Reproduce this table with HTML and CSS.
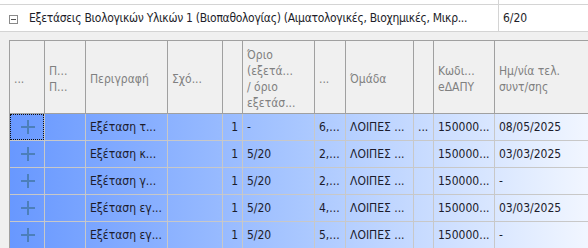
FILE: index.html
```html
<!DOCTYPE html>
<html lang="el">
<head>
<meta charset="utf-8">
<title>Εξετάσεις</title>
<link rel="stylesheet" href="styles.css">
</head>
<body>
<div class="page">
  <div class="strip"><div class="strip-main"></div><div class="strip-side"></div></div>
  <div class="group">
    <div class="group-main"><span class="collapse"></span><span class="group-title">Εξετάσεις Βιολογικών Υλικών 1 (Βιοπαθολογίας) (Αιματολογικές, Βιοχημικές, Μικρ...</span></div>
    <div class="group-side">6/20</div>
  </div>
  <div class="grid-area">
    <div class="table">
      <div class="row head">
        <div class="cell">...</div>
        <div class="cell">Π...<br>Π...</div>
        <div class="cell">Περιγραφή</div>
        <div class="cell">Σχό...</div>
        <div class="cell"></div>
        <div class="cell">Όριο<br>(εξετά...<br>/ όριο<br>εξετάσ...</div>
        <div class="cell">...</div>
        <div class="cell">Όμάδα</div>
        <div class="cell"></div>
        <div class="cell">Κωδι...<br>eΔΑΠΥ</div>
        <div class="cell last">Ημ/νία τελ.<br>συντ/σης</div>
      </div>

      <div class="row data">
        <div class="cell icon-cell"><div class="focus"><svg class="plus" width="14" height="14" viewBox="0 0 14 14"><rect x="0" y="6" width="14" height="2"/><rect x="6" y="0" width="2" height="14"/></svg></div></div>
        <div class="cell"></div>
        <div class="cell">Εξέταση τ...</div>
        <div class="cell"></div>
        <div class="cell num">1</div>
        <div class="cell">-</div>
        <div class="cell">6,...</div>
        <div class="cell">ΛΟΙΠΕΣ ...</div>
        <div class="cell">...</div>
        <div class="cell">150000...</div>
        <div class="cell last">08/05/2025</div>
      </div>

      <div class="row data">
        <div class="cell icon-cell"><svg class="plus" width="14" height="14" viewBox="0 0 14 14"><rect x="0" y="6" width="14" height="2"/><rect x="6" y="0" width="2" height="14"/></svg></div>
        <div class="cell"></div>
        <div class="cell">Εξέταση κ...</div>
        <div class="cell"></div>
        <div class="cell num">1</div>
        <div class="cell">5/20</div>
        <div class="cell">2,...</div>
        <div class="cell">ΛΟΙΠΕΣ ...</div>
        <div class="cell"></div>
        <div class="cell">150000...</div>
        <div class="cell last">03/03/2025</div>
      </div>

      <div class="row data">
        <div class="cell icon-cell"><svg class="plus" width="14" height="14" viewBox="0 0 14 14"><rect x="0" y="6" width="14" height="2"/><rect x="6" y="0" width="2" height="14"/></svg></div>
        <div class="cell"></div>
        <div class="cell">Εξέταση γ...</div>
        <div class="cell"></div>
        <div class="cell num">1</div>
        <div class="cell">5/20</div>
        <div class="cell">2,...</div>
        <div class="cell">ΛΟΙΠΕΣ ...</div>
        <div class="cell"></div>
        <div class="cell">150000...</div>
        <div class="cell last">-</div>
      </div>

      <div class="row data">
        <div class="cell icon-cell"><svg class="plus" width="14" height="14" viewBox="0 0 14 14"><rect x="0" y="6" width="14" height="2"/><rect x="6" y="0" width="2" height="14"/></svg></div>
        <div class="cell"></div>
        <div class="cell">Εξέταση εγ...</div>
        <div class="cell"></div>
        <div class="cell num">1</div>
        <div class="cell">5/20</div>
        <div class="cell">4,...</div>
        <div class="cell">ΛΟΙΠΕΣ ...</div>
        <div class="cell"></div>
        <div class="cell">150000...</div>
        <div class="cell last">03/03/2025</div>
      </div>

      <div class="row data">
        <div class="cell icon-cell"><svg class="plus" width="14" height="14" viewBox="0 0 14 14"><rect x="0" y="6" width="14" height="2"/><rect x="6" y="0" width="2" height="14"/></svg></div>
        <div class="cell"></div>
        <div class="cell">Εξέταση εγ...</div>
        <div class="cell"></div>
        <div class="cell num">1</div>
        <div class="cell">5/20</div>
        <div class="cell">5,...</div>
        <div class="cell">ΛΟΙΠΕΣ ...</div>
        <div class="cell"></div>
        <div class="cell">150000...</div>
        <div class="cell last">-</div>
      </div>
    </div>
  </div>
</div>
</body>
</html>
```

FILE: styles.css
```css
html, body {
  margin: 0;
  padding: 0;
}

body {
  background: #f0f0f0;
  font-family: "DejaVu Sans Condensed", "DejaVu Sans", sans-serif;
  font-stretch: condensed;
  font-size: 12px;
  color: #1c1c2c;
}

.page {
  width: 588px;
  height: 248px;
  overflow: hidden;
}

.strip {
  display: flex;
  height: 4px;
  background: #ffffff;
  border-bottom: 1px solid #d4d4d4;
}

.strip-main {
  width: 499px;
  box-sizing: border-box;
  border-right: 1px solid #d4d4d4;
}

.group {
  display: flex;
  height: 26px;
  background: #ffffff;
  border-bottom: 1px solid #d4d4d4;
}

.group-main {
  width: 499px;
  box-sizing: border-box;
  border-right: 1px solid #d4d4d4;
  display: flex;
  align-items: center;
  gap: 11px;
  padding-left: 9px;
  white-space: nowrap;
  overflow: hidden;
}

.collapse {
  flex: none;
  width: 9px;
  height: 9px;
  margin-top: 2px;
  box-sizing: border-box;
  border: 1px solid #8a8a8a;
  display: flex;
  align-items: center;
  justify-content: center;
}

.collapse::before {
  content: "";
  width: 5px;
  height: 1px;
  background: #505050;
}

.group-title {
  flex: none;
  color: #1e1e2a;
  letter-spacing: -0.3px;
}

.group-side {
  display: flex;
  align-items: center;
  padding-left: 4px;
  color: #1e1e2a;
}

.grid-area {
  padding: 8px 0 0 9px;
}

.table {
  border-left: 1px solid #a0a0a0;
}

.row {
  display: grid;
  grid-template-columns: 35px 41px 82px 55px 20px 72px 31px 68px 20px 61px 1fr;
}

.cell {
  box-sizing: border-box;
  padding: 0 4px;
  white-space: nowrap;
  overflow: hidden;
}

.head {
  border-top: 1px solid #a0a0a0;
  background: #f0f0f0;
}

.head .cell {
  height: 73px;
  padding-top: 3px;
  border-right: 1px solid #a0a0a0;
  border-bottom: 1px solid #a0a0a0;
  display: flex;
  align-items: center;
  line-height: 16px;
  color: #808080;
}

.data {
  background: linear-gradient(to right, #6898ff 0%, #a9c7ff 50%, #f1f6ff 100%);
}

.data .cell {
  height: 27px;
  line-height: 26px;
  border-right: 1px solid #c8c8c8;
  border-bottom: 1px solid #c8c8c8;
  color: #1c1c2c;
}

.cell.last {
  border-right: none;
}

.data .num {
  text-align: right;
}

.data .icon-cell {
  padding: 0;
  display: flex;
  align-items: center;
  padding-left: 11px;
}

.focus {
  width: 100%;
  height: 100%;
  margin-left: -11px;
  padding-left: 11px;
  box-sizing: content-box;
  display: flex;
  align-items: center;
  outline: 1px dotted #111;
  outline-offset: -1px;
}

.plus {
  display: block;
  fill: #4c7fba;
}
```
